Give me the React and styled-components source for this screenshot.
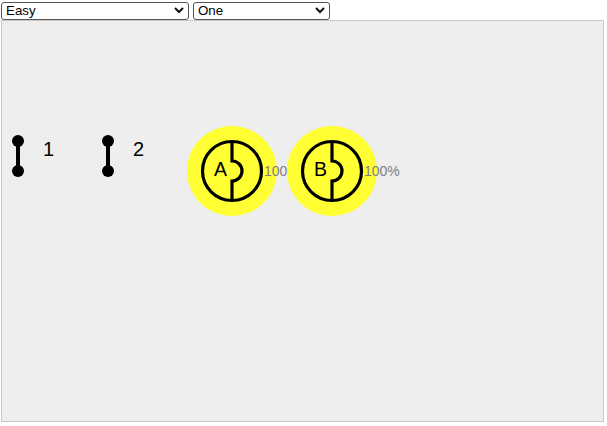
import React from "react";
import styled, { createGlobalStyle } from "styled-components";

const Global = createGlobalStyle`
  html, body { margin: 0; padding: 0; background: #fff; font-family: "Liberation Sans", Arial, sans-serif; }
`;

const Page = styled.div`
  width: 607px;
  height: 426px;
  overflow: hidden;
`;

const Toolbar = styled.div`
  display: flex;
  gap: 4px;
  height: 20px;
  padding: 1px 0 0 1px;
  box-sizing: border-box;
`;

const SelectWrap = styled.div`
  position: relative;
  width: ${(p) => p.$w}px;
  height: 18px;
`;

const Select = styled.select`
  appearance: none;
  width: 100%;
  height: 100%;
  box-sizing: border-box;
  border: 1px solid #555;
  border-radius: 3px;
  background: #fff;
  color: #000;
  font: 13.33px "Liberation Sans", Arial, sans-serif;
  padding: 0 0 0 4px;
  margin: 0;
`;

const Chevron = styled.svg`
  position: absolute;
  right: 5px;
  top: 5px;
  width: 10px;
  height: 8px;
  pointer-events: none;
`;

const Canvas = styled.div`
  display: grid;
  grid-template-columns: 90px 87px 100px 100px;
  align-items: start;
  margin-left: 1px;
  padding: 105px 0 0 8px;
  width: 603px;
  height: 402px;
  box-sizing: border-box;
  border: 1px solid #c8c8c8;
  background: #eee;
  overflow: hidden;
`;

const SwitchBody = styled.div`
  display: flex;
  align-items: flex-start;
  gap: 17px;
  padding-top: 8px;
`;

const SwitchLabel = styled.span`
  font-size: 20px;
  line-height: 23px;
  margin-top: 4px;
  color: #000;
`;

const Percent = styled.span`
  position: absolute;
  left: 77px;
  top: 37px;
  font-size: 14px;
  line-height: 16px;
  color: #808080;
  white-space: nowrap;
`;

const BulbBody = styled.div`
  position: relative;
  width: 90px;
  height: 90px;
`;

const BulbLetter = styled.span`
  position: absolute;
  left: 27px;
  top: 32px;
  font-size: 19.5px;
  line-height: 22px;
  color: #000;
`;

function Switch({ label }) {
  return (
    <SwitchBody>
      <svg width="16" height="44" viewBox="0 0 16 44">
        <circle cx="8" cy="7" r="6" fill="#000" />
        <circle cx="8" cy="37" r="6" fill="#000" />
        <line x1="8" y1="7" x2="8" y2="37" stroke="#000" strokeWidth="4" />
      </svg>
      <SwitchLabel>{label}</SwitchLabel>
    </SwitchBody>
  );
}

function Bulb({ label }) {
  return (
    <BulbBody>
      <svg width="90" height="90" viewBox="0 0 90 90">
        <circle cx="45" cy="45" r="45" fill="#ffff33" />
        <circle cx="45" cy="45" r="29.5" fill="none" stroke="#000" strokeWidth="3.2" />
        <path
          d="M45 15 V35 A10 10 0 0 1 45 55 V75"
          fill="none"
          stroke="#000"
          strokeWidth="3.2"
        />
      </svg>
      <BulbLetter>{label}</BulbLetter>
      <Percent>100%</Percent>
    </BulbBody>
  );
}

export default function App() {
  return (
    <Page>
      <Global />
      <Toolbar>
        <SelectWrap $w={188}>
          <Select defaultValue="Easy">
            <option>Easy</option>
          </Select>
          <Chevron viewBox="0 0 10 8">
            <path d="M1 2 L5 6 L9 2" fill="none" stroke="#111" strokeWidth="2" />
          </Chevron>
        </SelectWrap>
        <SelectWrap $w={137}>
          <Select defaultValue="One">
            <option>One</option>
          </Select>
          <Chevron viewBox="0 0 10 8">
            <path d="M1 2 L5 6 L9 2" fill="none" stroke="#111" strokeWidth="2" />
          </Chevron>
        </SelectWrap>
      </Toolbar>
      <Canvas>
        <Switch label="1" />
        <Switch label="2" />
        <Bulb label="A" />
        <Bulb label="B" />
      </Canvas>
    </Page>
  );
}
